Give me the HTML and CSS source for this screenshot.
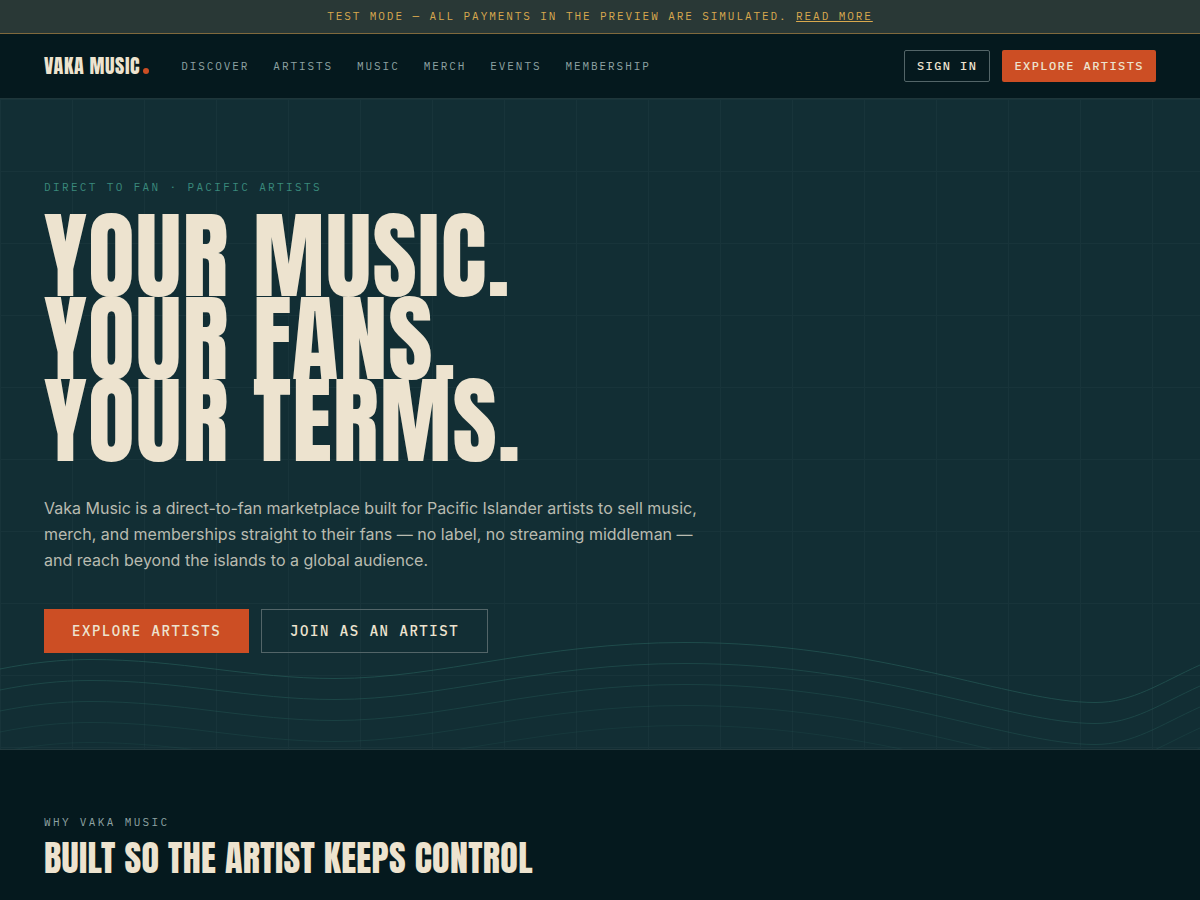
FILE: index.html
```html
<!DOCTYPE html>
<html lang="en">
<head>
    <meta charset="UTF-8">
    <meta name="viewport" content="width=device-width, initial-scale=1.0">
    <title>Vaka Music</title>
    <link rel="stylesheet" href="styles.css">
</head>
<body>

    <div class="banner">
        Test mode — all payments in the preview are simulated. <a href="#test-mode">Read more</a>
    </div>

    <header class="site-header">
        <a class="logo" href="#">Vaka Music<span class="logo-dot"></span></a>
        <nav class="main-nav">
            <a href="#discover">Discover</a>
            <a href="#artists">Artists</a>
            <a href="#music">Music</a>
            <a href="#merch">Merch</a>
            <a href="#events">Events</a>
            <a href="#membership">Membership</a>
        </nav>
        <div class="header-actions">
            <button type="button" class="btn btn-outline">Sign in</button>
            <button type="button" class="btn btn-primary">Explore artists</button>
        </div>
    </header>

    <main>
        <section class="hero">
            <svg class="waves" viewBox="0 0 1200 120" preserveAspectRatio="none" aria-hidden="true">
                <defs>
                    <path id="wave" vector-effect="non-scaling-stroke" d="M0 40 C30 34 60 30.5 90 30.5 C180 30.5 250 49.5 335 49.5 C440 49.5 540 13.5 685 13.5 C880 13.5 1010 73.5 1095 73.5 C1133 73.5 1160 54 1200 36"/>
                </defs>
                <use href="#wave" opacity="0.32"/>
                <use href="#wave" y="21" opacity="0.26"/>
                <use href="#wave" y="42" opacity="0.2"/>
                <use href="#wave" y="63" opacity="0.14"/>
                <use href="#wave" y="83" opacity="0.1"/>
            </svg>
            <div class="hero-content">
                <p class="eyebrow eyebrow-teal">Direct to fan · Pacific artists</p>
                <h1>Your music.<br>Your fans.<br>Your terms.</h1>
                <p class="lead">Vaka Music is a direct-to-fan marketplace built for Pacific Islander artists to sell music, merch, and memberships straight to their fans — no label, no streaming middleman — and reach beyond the islands to a global audience.</p>
                <div class="hero-actions">
                    <button type="button" class="btn btn-large btn-primary">Explore artists</button>
                    <button type="button" class="btn btn-large btn-outline">Join as an artist</button>
                </div>
            </div>
        </section>

        <section class="why">
            <p class="eyebrow">Why Vaka Music</p>
            <h2>Built so the artist keeps control</h2>
        </section>
    </main>

</body>
</html>
```
FILE: styles.css
```css
:root {
    --ink: #05191e;
    --deep: #122e34;
    --cream: #ede3cf;
    --orange: #cc4e24;
    --gold: #d9a94e;
    --muted: #8fa3a3;
    --teal: #3a8a7c;
    --display: Anton, "Liberation Sans Narrow", "DejaVu Sans Condensed", sans-serif;
    --mono: "IBM Plex Mono", "Liberation Mono", monospace;
}

* {
    box-sizing: border-box;
}

body {
    margin: 0;
    background: var(--ink);
    color: var(--cream);
    font-family: Inter, sans-serif;
}

h1,
h2,
p {
    margin: 0;
}

.banner {
    padding: 8px 16px;
    background: #293836;
    border-bottom: 1px solid #80693d;
    color: var(--gold);
    font: 11px/17px var(--mono);
    letter-spacing: 0.175em;
    text-align: center;
    text-transform: uppercase;
}

.banner a {
    color: inherit;
    text-underline-offset: 1px;
}

.site-header {
    display: flex;
    align-items: center;
    min-height: 65px;
    padding: 0 44px;
    border-bottom: 1px solid #1f363a;
}

.logo {
    display: flex;
    align-items: baseline;
    gap: 3px;
    color: var(--cream);
    font: 20px/32px var(--display);
    letter-spacing: 0.03em;
    text-decoration: none;
    text-transform: uppercase;
}

.logo-dot {
    width: 6px;
    height: 6px;
    border-radius: 50%;
    background: var(--orange);
}

.main-nav {
    display: flex;
    gap: 24px;
    margin-left: 32px;
}

.main-nav a {
    color: var(--muted);
    font: 11px/16px var(--mono);
    letter-spacing: 0.175em;
    text-decoration: none;
    text-transform: uppercase;
}

.header-actions {
    display: flex;
    gap: 12px;
    margin-left: auto;
}

.btn {
    height: 32px;
    padding: 0 12px;
    border: 0;
    border-radius: 2px;
    color: var(--cream);
    font: 500 12px/16px var(--mono);
    letter-spacing: 0.12em;
    text-transform: uppercase;
    cursor: pointer;
}

.btn-primary {
    background: var(--orange);
}

.btn-outline {
    background: transparent;
    border: 1px solid #536568;
}

.btn-large {
    height: 44px;
    padding: 0 28px;
    border-radius: 0;
    font-size: 14px;
    letter-spacing: 0.11em;
}

.hero {
    position: relative;
    padding: 80px 44px 96px;
    border-bottom: 1px solid #22393d;
    background-color: var(--deep);
    background-image:
        linear-gradient(to right, #18343a 1px, transparent 1px),
        linear-gradient(to bottom, #18343a 1px, transparent 1px);
    background-size: 72px 72px;
}

.waves {
    position: absolute;
    left: 0;
    bottom: 0;
    width: 100%;
    height: 120px;
    fill: none;
    stroke: var(--teal);
}

.hero-content {
    position: relative;
}

.eyebrow {
    color: var(--muted);
    font: 11px/16px var(--mono);
    letter-spacing: 0.215em;
    text-transform: uppercase;
}

.eyebrow-teal {
    color: var(--teal);
}

h1,
h2 {
    font-family: var(--display);
    font-weight: 400;
    letter-spacing: 0.01em;
    text-transform: uppercase;
}

h1 {
    margin-top: 20px;
    font-size: 96px;
    letter-spacing: 0.012em;
    line-height: 0.86;
}

.lead {
    max-width: 672px;
    margin-top: 32px;
    color: #b9bbb0;
    font-size: 16px;
    line-height: 26px;
}

.hero-actions {
    display: flex;
    gap: 12px;
    margin-top: 36px;
}

.why {
    padding: 64px 44px;
}

h2 {
    margin-top: 8px;
    font-size: 36px;
    line-height: 40px;
}
```
